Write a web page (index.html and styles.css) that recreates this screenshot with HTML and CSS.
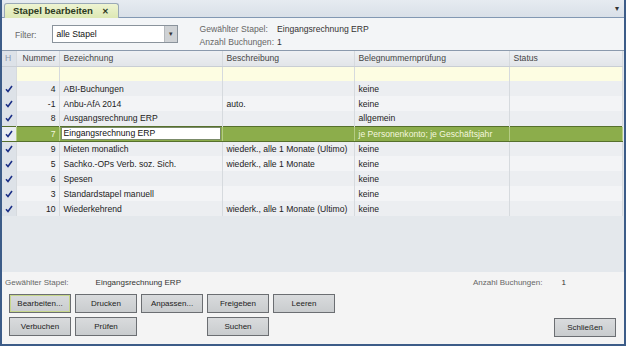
FILE: index.html
```html
<!DOCTYPE html>
<html lang="de">
<head>
    <meta charset="UTF-8">
    <title>Stapel bearbeiten</title>
    <link rel="stylesheet" href="styles.css">
</head>
<body>
    <div class="window">
        <div class="tabstrip">
            <div class="tab">Stapel bearbeiten <span class="close">&#x2715;</span></div>
            <div class="strip-arrow">&#9662;</div>
        </div>

        <div class="filterbar">
            <span class="label">Filter:</span>
            <div class="select">
                <span class="select-text">alle Stapel</span>
                <span class="select-btn">&#9662;</span>
            </div>
            <div class="info">
                <span class="label">Gewählter Stapel:</span><span>Eingangsrechnung ERP</span>
                <span class="label">Anzahl Buchungen:</span><span>1</span>
            </div>
        </div>

        <div class="grid">
            <table>
                <thead>
                    <tr>
                        <th class="c-check">H</th>
                        <th class="c-num">Nummer</th>
                        <th class="c-name">Bezeichnung</th>
                        <th class="c-desc">Beschreibung</th>
                        <th class="c-beleg">Belegnummernprüfung</th>
                        <th class="c-status">Status</th>
                    </tr>
                </thead>
                <tbody id="rows">
                    <tr class="new-row">
                        <td class="c-check"></td><td></td><td></td><td></td><td></td><td></td>
                    </tr>
                </tbody>
            </table>
        </div>

        <div class="footer">
            <div class="footer-info">
                <span class="label">Gewählter Stapel:</span>
                <span class="value">Eingangsrechnung ERP</span>
                <span class="label right">Anzahl Buchungen:</span>
                <span class="value count">1</span>
            </div>
            <div class="btn-row">
                <button class="btn focused">Bearbeiten...</button>
                <button class="btn">Drucken</button>
                <button class="btn">Anpassen...</button>
                <button class="btn">Freigeben</button>
                <button class="btn">Leeren</button>
            </div>
            <div class="btn-row">
                <button class="btn">Verbuchen</button>
                <button class="btn">Prüfen</button>
                <span class="btn-gap"></span>
                <button class="btn">Suchen</button>
                <span class="spacer"></span>
                <button class="btn close-btn">Schließen</button>
            </div>
        </div>
    </div>

    <script>
        const stapel = [
            { nr: "4", name: "ABI-Buchungen", desc: "", beleg: "keine" },
            { nr: "-1", name: "Anbu-AfA 2014", desc: "auto.", beleg: "keine" },
            { nr: "8", name: "Ausgangsrechnung ERP", desc: "", beleg: "allgemein" },
            { nr: "7", name: "Eingangsrechnung ERP", desc: "", beleg: "je Personenkonto; je Geschäftsjahr", selected: true },
            { nr: "9", name: "Mieten monatlich", desc: "wiederk., alle 1 Monate (Ultimo)", beleg: "keine" },
            { nr: "5", name: "Sachko.-OPs Verb. soz. Sich.", desc: "wiederk., alle 1 Monate", beleg: "keine" },
            { nr: "6", name: "Spesen", desc: "", beleg: "keine" },
            { nr: "3", name: "Standardstapel manuell", desc: "", beleg: "keine" },
            { nr: "10", name: "Wiederkehrend", desc: "wiederk., alle 1 Monate (Ultimo)", beleg: "keine" }
        ];

        const check = '<svg width="8" height="8" viewBox="0 0 8 8"><path d="M1 4.2 L3 6.5 L7 1" fill="none" stroke="#1b2f86" stroke-width="1.6"/></svg>';
        const tbody = document.getElementById("rows");

        stapel.forEach((s, i) => {
            const tr = document.createElement("tr");
            tr.className = s.selected ? "selected" : (i % 2 ? "odd" : "even");
            tr.innerHTML =
                `<td class="c-check">${check}</td>` +
                `<td class="c-num">${s.nr}</td>` +
                `<td class="c-name"><span>${s.name}</span></td>` +
                `<td>${s.desc}</td>` +
                `<td>${s.beleg}</td>` +
                `<td></td>`;
            tbody.appendChild(tr);
        });
    </script>
</body>
</html>
```

FILE: styles.css
```css
body {
    margin: 0;
    font-family: "Liberation Sans", Arial, sans-serif;
    font-size: 8px;
    color: #222;
    background: #fff;
}
.window {
    width: 626px;
    height: 346px;
    box-sizing: border-box;
    border-left: 2px solid #3c5c88;
    border-right: 2px solid #3c5c88;
    border-bottom: 2px solid #3c5c88;
    display: flex;
    flex-direction: column;
    overflow: hidden;
}
.tabstrip {
    height: 18px;
    box-sizing: border-box;
    background: linear-gradient(#e6ebf1, #d9e0e8);
    border-bottom: 1px solid #8298b3;
    display: flex;
    align-items: flex-end;
    padding-left: 2px;
}
.tab {
    height: 15px;
    box-sizing: border-box;
    padding: 0 9px 0 8px;
    margin-bottom: -1px;
    background: linear-gradient(#eef4d2, #dde8b4);
    border: 1px solid #9aa9b6;
    border-bottom: none;
    border-radius: 3px 3px 0 0;
    font-size: 9.6px;
    font-weight: bold;
    color: #2d3a22;
    line-height: 14px;
}
.tab .close {
    margin-left: 6px;
    font-size: 8px;
}
.strip-arrow {
    margin-left: auto;
    margin-right: 5px;
    margin-bottom: 4px;
    font-size: 8px;
    color: #333;
}
.filterbar {
    height: 32px;
    box-sizing: border-box;
    background: #f3f5f7;
    display: flex;
    align-items: flex-start;
    padding: 7px 0 0 13px;
    font-size: 8.6px;
}
.label {
    color: #666;
}
.filterbar > .label {
    margin-top: 5px;
}
.select {
    margin-left: 16px;
    width: 126px;
    height: 18px;
    box-sizing: border-box;
    border: 1px solid #8a939c;
    background: #fff;
    display: flex;
}
.select-text {
    flex: 1;
    line-height: 16px;
    padding-left: 3px;
    color: #111;
}
.select-btn {
    width: 12px;
    background: #cfd2d5;
    border-left: 1px solid #b5b9bd;
    font-size: 7px;
    line-height: 16px;
    text-align: center;
    color: #333;
}
.info {
    margin-left: 21px;
    margin-top: -1px;
    display: grid;
    grid-template-columns: auto auto;
    column-gap: 3px;
    row-gap: 3px;
    line-height: 10px;
    color: #333;
}
.grid {
    flex: 1;
    background: #e4e8ec;
    border-top: 1px solid #8b9aad;
    font-size: 8.6px;
}
table {
    width: 620px;
    border-collapse: collapse;
    table-layout: fixed;
}
th, td {
    height: 15px;
    padding: 0 4px;
    border-right: 1px solid #d6dade;
    white-space: nowrap;
    overflow: hidden;
    text-align: left;
    box-sizing: border-box;
}
th {
    font-weight: normal;
    color: #444;
    background: linear-gradient(#eef0f3, #e2e5e9);
    border-bottom: 1px solid #c9ced4;
}
.c-check {
    width: 14px;
    padding: 0 0 0 3px;
    background: #dde2e8;
    color: #8a9aae;
}
.c-num {
    width: 43px;
    text-align: right;
    padding-right: 3px;
}
.c-name { width: 163px; }
.c-desc { width: 132px; }
.c-beleg { width: 155px; }
.c-status { width: 113px; }
.new-row td {
    background: #fdfde2;
}
.new-row td.c-check {
    background: #dde2e8;
}
tr.even td {
    background: #eceef1;
}
tr.odd td {
    background: #f3f4f6;
}
tbody td.c-check {
    background: #dde2e8;
}
tbody td.c-check svg {
    display: block;
}
tr.selected td {
    background: #8cad4b;
    color: #f4f7df;
    border-top: 1px solid #56702c;
    border-bottom: 1px solid #56702c;
    border-right-color: #b5cc84;
}
tr.selected td.c-check {
    background: #e9edf1;
}
tr.selected td.c-name {
    padding: 0 1px;
}
tr.selected td.c-name span {
    display: block;
    background: #fff;
    color: #111;
    border: 1px solid #7b8b6a;
    padding: 0 2px;
    line-height: 11px;
}
.footer {
    height: 72px;
    background: #f4f4f4;
    padding: 4px 0 0 5px;
    box-sizing: border-box;
}
.footer-info {
    display: flex;
    height: 14px;
    line-height: 14px;
    margin-left: -2px;
    color: #333;
}
.footer-info .value {
    margin-left: 27px;
}
.footer-info .label.right {
    margin-left: 292px;
}
.footer-info .value.count {
    margin-left: 19px;
}
.btn-row {
    display: flex;
    gap: 4px;
    margin-top: 4px;
    padding-right: 8px;
    padding-left: 2px;
}
.btn {
    width: 62px;
    height: 19px;
    padding: 0;
    font-family: "Liberation Sans", Arial, sans-serif;
    font-size: 8px;
    color: #222;
    background: linear-gradient(#d9dbdd, #c9ccce);
    border: 1px solid #6b6e72;
}
.btn.focused {
    box-shadow: inset 0 0 0 1px #c7d78c;
}
.btn-gap {
    width: 62px;
}
.spacer {
    flex: 1;
}
.close-btn {
    margin-top: 1px;
}
```
